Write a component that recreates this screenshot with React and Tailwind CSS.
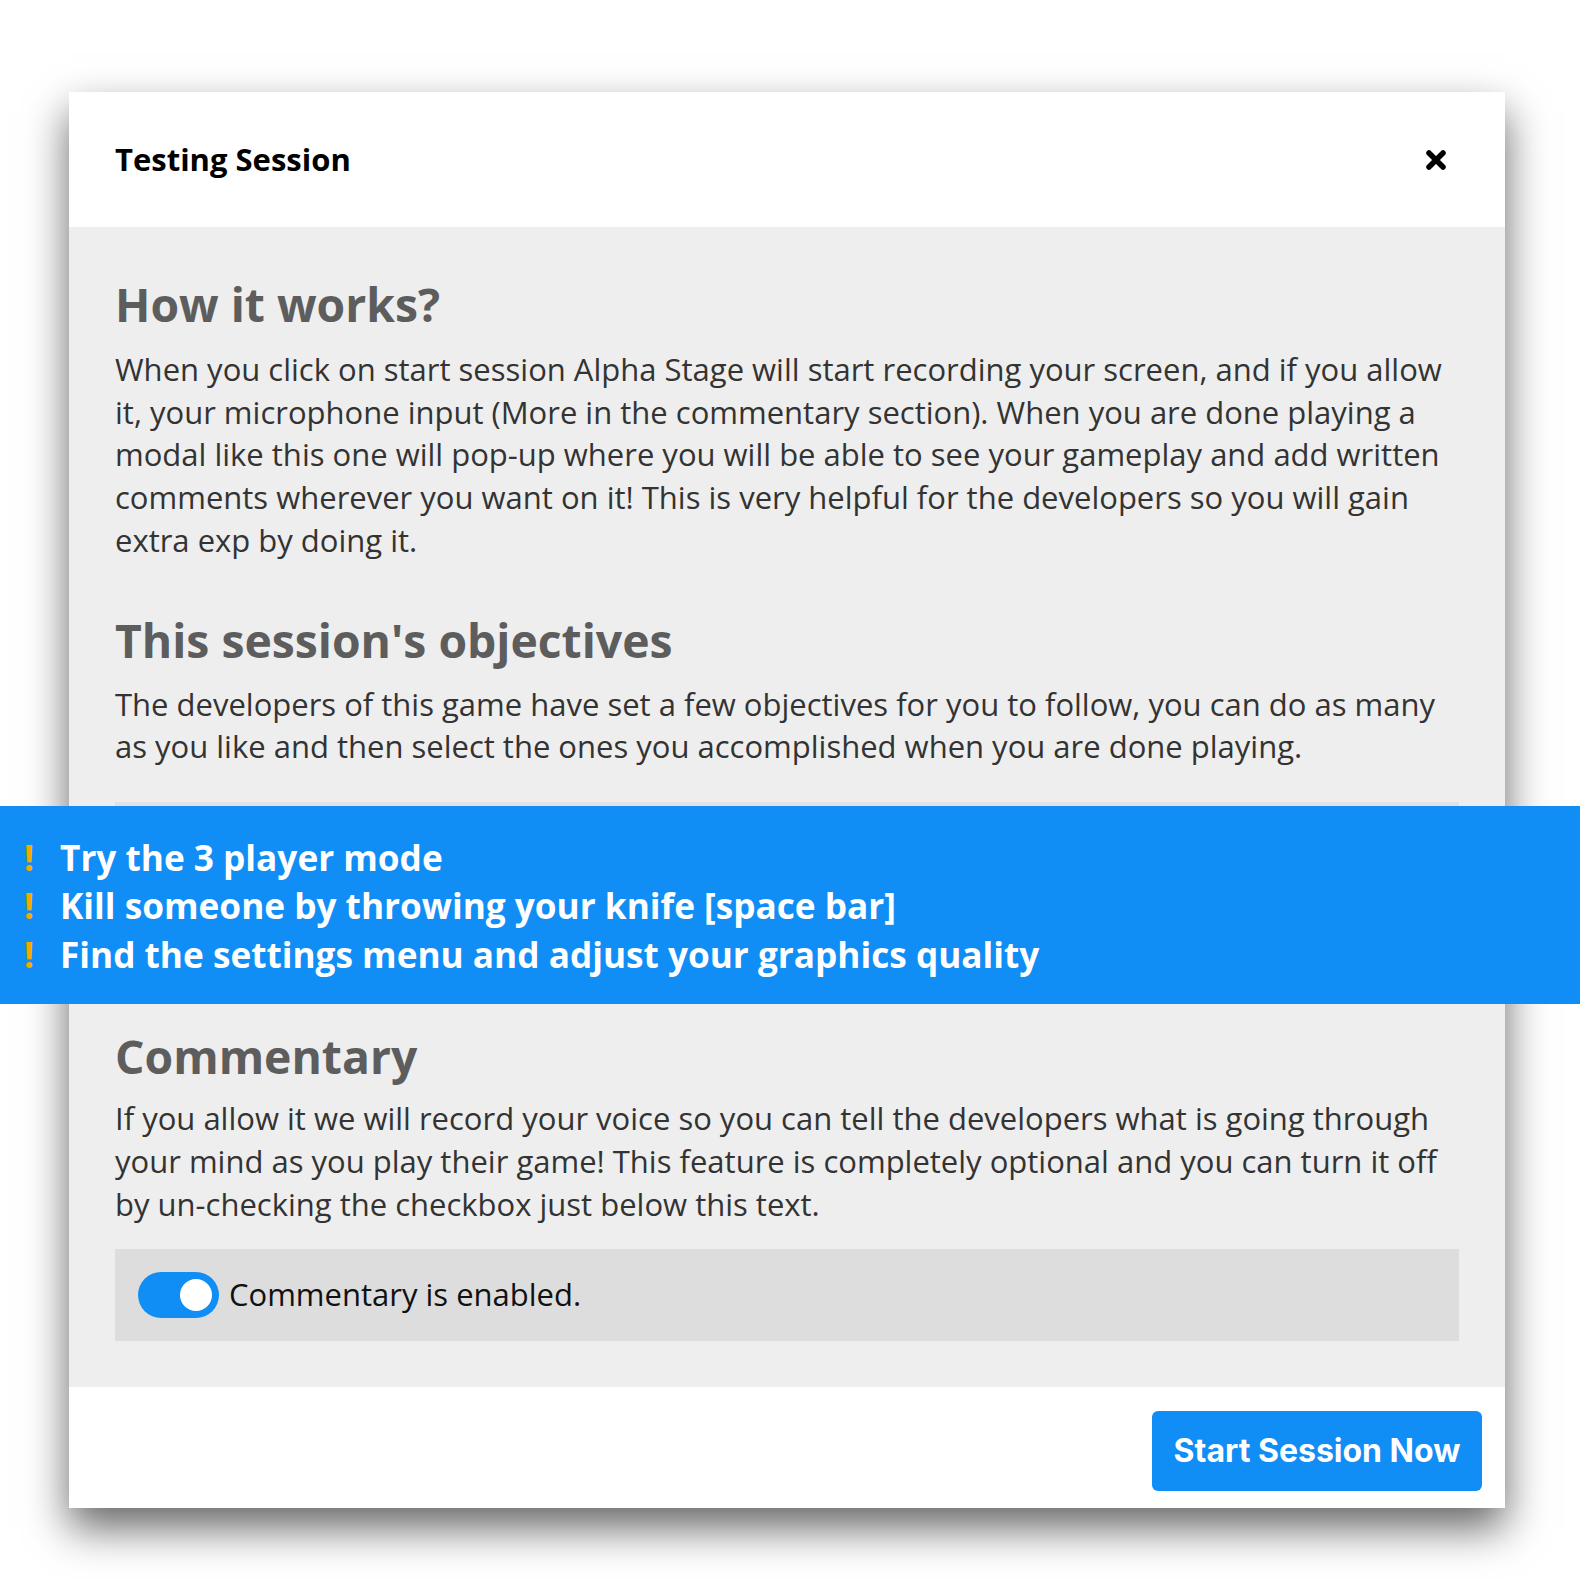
import React from 'react'

const objectives = [
  'Try the 3 player mode',
  'Kill someone by throwing your knife [space bar]',
  'Find the settings menu and adjust your graphics quality',
]

const CloseIcon = () => (
  <svg width="22" height="22" viewBox="0 0 22 22" aria-hidden="true">
    <path d="M4 4 L18 18 M18 4 L4 18" stroke="#000" strokeWidth="5.5" strokeLinecap="round" />
  </svg>
)

const Heading = ({ children, className = '' }) => (
  <h2 className={`text-[46.3px] leading-[55px] font-bold text-[#5d5d5d] ${className}`}>{children}</h2>
)

const Paragraph = ({ children, className = '' }) => (
  <p className={`text-[31px] leading-[42.7px] text-[#333333] ${className}`}>{children}</p>
)

export default function App() {
  return (
    <div className="min-h-[1580px] bg-white pt-[92px] pl-[69px] overflow-hidden" style={{ fontFamily: '"Open Sans", "Noto Sans", sans-serif' }}>
      <div className="w-[1436px] bg-white shadow-[0_20px_40px_rgba(0,0,0,0.6)]">
        {/* Header */}
        <div className="h-[135px] flex items-center justify-between pl-[46px] pr-[58px]">
          <h1 className="text-[31px] font-bold text-black">Testing Session</h1>
          <CloseIcon />
        </div>

        {/* Body */}
        <div className="bg-[#eeeeee] px-[46px] pt-[50px] pb-[46px]">
          <Heading>How it works?</Heading>
          <Paragraph className="mt-[16px]">
            When you click on start session Alpha Stage will start recording your screen, and if you allow
            it, your microphone input (More in the commentary section). When you are done playing a
            modal like this one will pop-up where you will be able to see your gameplay and add written
            comments wherever you want on it! This is very helpful for the developers so you will gain
            extra exp by doing it.
          </Paragraph>

          <Heading className="mt-[51px]">This session's objectives</Heading>
          <Paragraph className="mt-[15px]">
            The developers of this game have set a few objectives for you to follow, you can do as many
            as you like and then select the ones you accomplished when you are done playing.
          </Paragraph>

          {/* Objectives */}
          <div className="mt-[34px] h-[4px] bg-[#e2e2e2]" />
          <div className="-ml-[115px] -mr-[121px] bg-[#118ef5] pt-[27px] pb-[26px]">
            {objectives.map((item) => (
              <div key={item} className="flex text-[35.2px] leading-[48.5px] font-bold text-white pl-[24px]">
                <span className="w-[36px] text-[#f7a800]">!</span>
                <span>{item}</span>
              </div>
            ))}
          </div>

          <Heading className="mt-[25px]">Commentary</Heading>
          <Paragraph className="mt-[13px]">
            If you allow it we will record your voice so you can tell the developers what is going through
            your mind as you play their game! This feature is completely optional and you can turn it off
            by un-checking the checkbox just below this text.
          </Paragraph>

          {/* Commentary toggle */}
          <div className="mt-[23px] h-[92px] bg-[#dddddd] flex items-center pl-[23px]">
            <div className="w-[81px] h-[46px] rounded-full bg-[#118ef5] flex items-center justify-end pr-[7px]">
              <div className="w-[32px] h-[32px] rounded-full bg-white" />
            </div>
            <span className="ml-[10px] text-[31px] text-[#111111]">Commentary is enabled.</span>
          </div>
        </div>

        {/* Footer */}
        <div className="flex justify-end pt-[24px] pb-[17px] pr-[23px]">
          <button
            className="w-[330px] h-[80px] rounded-[6px] bg-[#118ef5] text-white text-[32px] font-bold"
            style={{ fontFamily: 'Inter, "Liberation Sans", sans-serif' }}
          >
            Start Session Now
          </button>
        </div>
      </div>
    </div>
  )
}
